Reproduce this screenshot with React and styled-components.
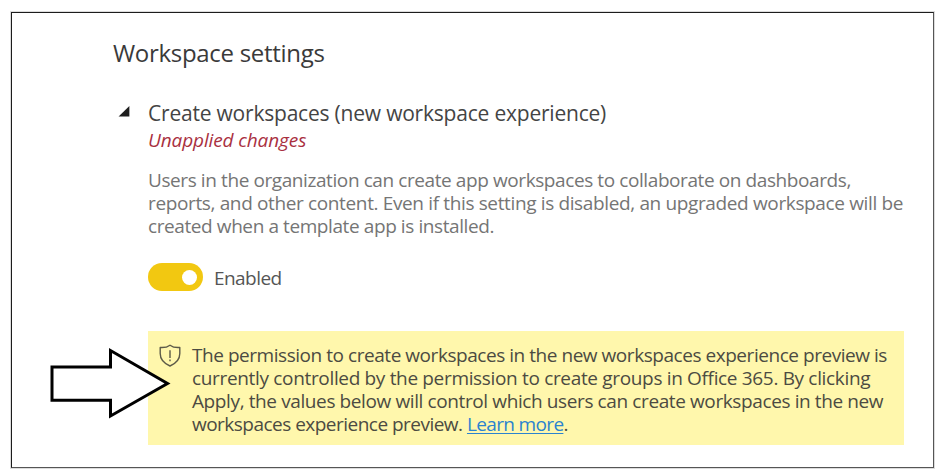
import React from "react";
import styled, { createGlobalStyle } from "styled-components";

const GlobalStyle = createGlobalStyle`
  * { box-sizing: border-box; }
  body {
    margin: 0;
    background: #fff;
    font-family: "Open Sans", "Noto Sans", sans-serif;
  }
`;

const Page = styled.main`
  width: 940px;
  height: 473px;
  padding: 12px 0 0 11px;
`;

const Frame = styled.section`
  position: relative;
  width: 923px;
  height: 456px;
  padding: 25px 29px 0 101px;
  border: 1px solid #1c1c1c;
  border-right-color: #555;
  border-bottom-color: #555;
  box-shadow: 0 0 0 1px #dcdcdc;
`;

const Title = styled.h1`
  margin: 0;
  font-size: 24px;
  font-weight: 400;
  line-height: 30px;
  letter-spacing: -0.3px;
  color: #3a3a3a;
`;

const Setting = styled.div`
  display: grid;
  grid-template-columns: 35px 756px;
  margin-top: 31px;
`;

const Caret = styled.svg`
  width: 12px;
  height: 12px;
  margin: 6px 0 0 5px;
  fill: #1e1e1e;
`;

const Content = styled.div`
  display: flex;
  flex-direction: column;
`;

const Line = styled.span`
  display: block;
  white-space: nowrap;
  letter-spacing: ${(p) => p.$track || 0}px;
`;

const SettingName = styled.h2`
  margin: 0;
  padding-top: 1px;
  font-size: 21px;
  font-weight: 400;
  line-height: 26px;
  color: #444;
`;

const Pending = styled.div`
  margin-top: 3px;
  font-size: 19px;
  font-style: italic;
  line-height: 23px;
  color: #a9303f;
`;

const Description = styled.p`
  margin: 17px 0 0;
  font-size: 19px;
  line-height: 23px;
  color: #757575;
`;

const ToggleRow = styled.div`
  display: flex;
  align-items: center;
  gap: 11px;
  height: 28px;
  margin-top: 25px;
`;

const Toggle = styled.button`
  display: flex;
  align-items: center;
  justify-content: flex-end;
  width: 55px;
  height: 28px;
  padding: 0 6px 0 0;
  border: 0;
  border-radius: 14px;
  background: #f2c811;
`;

const Knob = styled.span`
  width: 15px;
  height: 15px;
  border-radius: 50%;
  background: #fff;
`;

const ToggleLabel = styled.span`
  padding-top: 2px;
  font-size: 19px;
  line-height: 28px;
  letter-spacing: -0.55px;
  color: #555;
`;

const Notice = styled.div`
  display: grid;
  grid-template-columns: 33px 1fr;
  height: 114px;
  margin-top: 40px;
  padding: 13px 0 0 11px;
  background: #fff7ac;
`;

const Shield = styled.svg`
  width: 22px;
  height: 23px;
  fill: none;
  stroke: #5c5a48;
  stroke-width: 1.4;
  stroke-linejoin: round;
`;

const NoticeText = styled.p`
  margin: 0;
  font-size: 19px;
  line-height: 23px;
  color: #4c4b42;
`;

const Link = styled.a`
  color: #2b83cf;
  letter-spacing: -0.65px;
  text-decoration: underline;
  text-decoration-thickness: 1px;
  text-underline-offset: 2px;
  text-decoration-skip-ink: none;
`;

const Pointer = styled.svg`
  position: absolute;
  left: 37px;
  top: 333px;
  width: 124px;
  height: 76px;
  fill: #fff;
  stroke: #000;
  stroke-width: 3;
`;

const description = [
  ["Users in the organization can create app workspaces to collaborate on dashboards,", -0.41],
  ["reports, and other content. Even if this setting is disabled, an upgraded workspace will be", -0.363],
  ["created when a template app is installed.", -0.41],
];

const notice = [
  ["The permission to create workspaces in the new workspaces experience preview is", -0.455],
  ["currently controlled by the permission to create groups in Office 365. By clicking", -0.335],
  ["Apply, the values below will control which users can create workspaces in the new", -0.39],
];

export default function App() {
  return (
    <Page>
      <GlobalStyle />
      <Frame>
        <Title>Workspace settings</Title>
        <Setting>
          <Caret viewBox="0 0 12 12">
            <path d="M0.6 11.4H11.4V1Z" />
          </Caret>
          <Content>
            <SettingName>
              <Line $track={-0.21}>Create workspaces (new workspace experience)</Line>
            </SettingName>
            <Pending>
              <Line $track={-0.12}>Unapplied changes</Line>
            </Pending>
            <Description>
              {description.map(([text, track]) => (
                <Line key={text} $track={track}>{text}</Line>
              ))}
            </Description>
            <ToggleRow>
              <Toggle role="switch" aria-checked="true" aria-label="Enabled">
                <Knob />
              </Toggle>
              <ToggleLabel>Enabled</ToggleLabel>
            </ToggleRow>
            <Notice>
              <Shield viewBox="0 0 22 23">
                <path d="M11 1.2C8.4 3.1 4.9 3.8 1.2 3.5V9.5C1.2 15.5 5 19.4 11 22C17 19.4 20.8 15.5 20.8 9.5V3.5C17.1 3.8 13.6 3.1 11 1.2Z" />
                <path d="M11 6.2V14M11 15.5V17.2" />
              </Shield>
              <NoticeText>
                {notice.map(([text, track]) => (
                  <Line key={text} $track={track}>{text}</Line>
                ))}
                <Line $track={-0.52}>
                  workspaces experience preview. <Link>Learn more</Link>.
                </Line>
              </NoticeText>
            </Notice>
          </Content>
        </Setting>
        <Pointer viewBox="0 0 124 76">
          <path d="M3 21H61.5V4.5L118.5 37.5L61.5 70V54.2H3Z" />
        </Pointer>
      </Frame>
    </Page>
  );
}
